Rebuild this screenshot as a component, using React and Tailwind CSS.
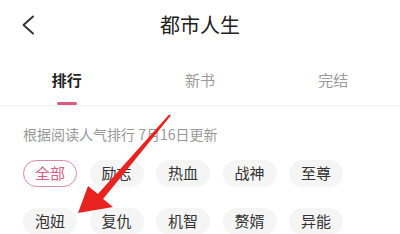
const TAGS = ["全部", "励志", "热血", "战神", "至尊", "泡妞", "复仇", "机智", "赘婿", "异能"];
const TABS = ["排行", "新书", "完结"];

function Arrow() {
    return (
        <svg
            className="pointer-events-none absolute left-0 top-0"
            width="400"
            height="234"
            viewBox="0 0 400 234"
        >
            <polygon
                fill="#e8231f"
                points="78,213 88,186 97.9,194.1 169.3,114.3 170.7,115.7 103.1,198.9 113,207"
            />
        </svg>
    );
}

export default function App() {
    return (
        <div
            className="relative h-[234px] w-[400px] overflow-hidden bg-white"
            style={{ fontFamily: '"Noto Sans CJK SC", "Noto Sans", sans-serif' }}
        >
            <header className="grid h-[50px] grid-cols-[1fr_auto_1fr] items-center">
                <div className="pl-[21px] text-[#333]">
                    <svg width="14" height="20" viewBox="0 0 14 20" fill="none">
                        <path
                            d="M12 1.5 L2.5 10 L12 18.5"
                            stroke="currentColor"
                            strokeWidth="1.9"
                            strokeLinecap="round"
                            strokeLinejoin="round"
                        />
                    </svg>
                </div>
                <h1 className="text-[20px] leading-[24px] text-[#222]">都市人生</h1>
                <div />
            </header>

            <nav className="grid h-[56px] grid-cols-3 border-b border-[#f0f0f0]">
                {TABS.map((tab, i) => (
                    <div key={tab} className="flex flex-col items-center pt-[20px]">
                        <span
                            className={
                                i === 0
                                    ? "text-[15px] font-bold leading-[20px] text-[#222]"
                                    : "text-[15px] leading-[20px] text-[#9a9a9a]"
                            }
                        >
                            {tab}
                        </span>
                        {i === 0 && (
                            <span className="mt-[12px] h-[3px] w-[20px] rounded-full bg-[#e05a7e]" />
                        )}
                    </div>
                ))}
            </nav>

            <p className="px-[23px] pt-[18px] text-[14px] leading-[20px] text-[#999]">
                根据阅读人气排行 7月16日更新
            </p>

            <div className="mt-[16px] flex flex-wrap gap-x-[12.5px] gap-y-[21px] px-[23px]">
                {TAGS.map((tag, i) => (
                    <span
                        key={tag}
                        className={
                            i === 0
                                ? "flex h-[27px] w-[54px] items-center justify-center rounded-full border-[1.5px] border-[#dc8aa0] text-[15px] text-[#d85c80]"
                                : "flex h-[27px] w-[54px] items-center justify-center rounded-full bg-[#f5f5f5] text-[15px] text-[#333]"
                        }
                    >
                        {tag}
                    </span>
                ))}
            </div>

            <Arrow />
        </div>
    );
}
